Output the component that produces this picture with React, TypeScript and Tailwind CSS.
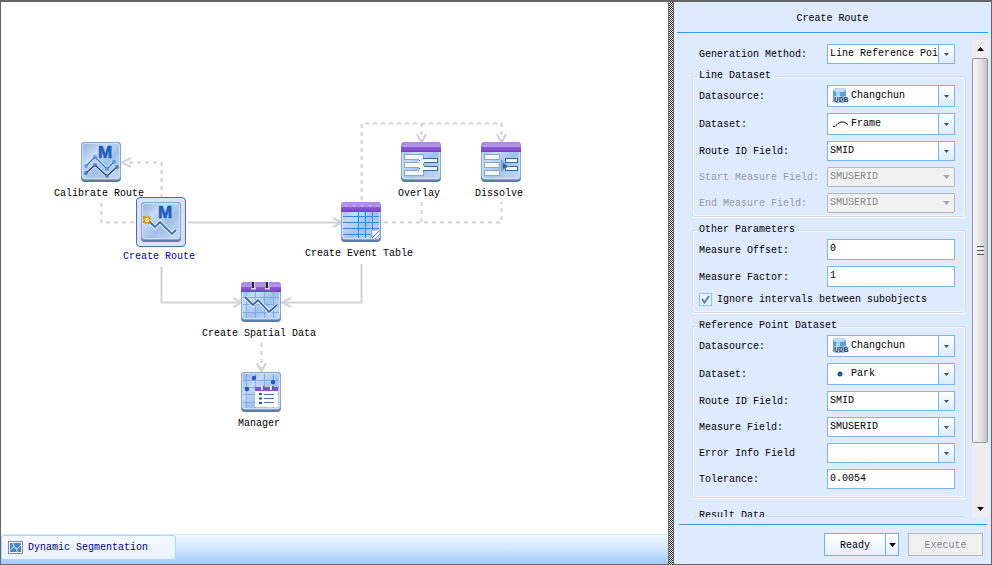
import { useId, type ReactNode } from "react";

const TILE = "h-10 w-10 shrink-0";

function Tile({ header, grid, children }: { header?: boolean; grid?: boolean; children: ReactNode }) {
  const id = useId();
  return (
    <svg viewBox="0 0 40 40" className={TILE} aria-hidden="true">
      <defs>
        <linearGradient id={id + "b"} x1="0" y1="0" x2="1" y2="1">
          <stop offset="0" stopColor="#94b4de" />
          <stop offset="0.3" stopColor="#c6dbf5" />
          <stop offset="0.6" stopColor="#a3c1e8" />
          <stop offset="1" stopColor="#c3d9f3" />
        </linearGradient>
        <linearGradient id={id + "p"} x1="0" y1="0" x2="0" y2="1">
          <stop offset="0" stopColor="#a98ae4" />
          <stop offset="0.5" stopColor="#b496ea" />
          <stop offset="0.55" stopColor="#8c5bd2" />
          <stop offset="1" stopColor="#7a3fc4" />
        </linearGradient>
      </defs>
      <rect width="40" height="40" rx="4" fill="#5a7cab" />
      <rect width="40" height="38" rx="4" fill="#86a6d2" />
      <rect x="1" y="1" width="38" height="36" rx="3" fill="#d0e1f6" />
      <rect x="2" y="2" width="36" height="34" rx="2" fill={`url(#${id}b)`} />
      {grid && (
        <path
          d="M5.500 2V36M14.500 2V36M23.500 2V36M32.500 2V36M2 8.500H38M2 15.500H38M2 22.500H38M2 30.500H38"
          stroke="#6ea5e6"
          strokeWidth="1"
          opacity="0.8"
        />
      )}
      {header && <path d="M0 10V4Q0 0 4 0H36Q40 0 40 4V10Z" fill={`url(#${id}p)`} />}
      {children}
    </svg>
  );
}

function Measure() {
  return (
    <text x="17" y="16" fontFamily="Liberation Sans, sans-serif" fontWeight="700" fontSize="17" fill="#1f5cc0" stroke="#1f5cc0" strokeWidth="0.6">
      M
    </text>
  );
}

function CalibrateIcon() {
  const upper = [[5, 24], [14, 15], [26, 27], [33, 20]];
  const lower = [[5, 31], [14, 23], [26, 34], [36, 25]];
  const line = (p: number[][]) => p.map((q) => q.join(",")).join(" ");
  return (
    <Tile>
      <Measure />
      <g fill="none">
        <polyline points={line(upper)} stroke="#eaf3ff" strokeWidth="3" />
        <polyline points={line(upper)} stroke="#3a7cc4" strokeWidth="1.500" />
        <polyline points={line(lower)} stroke="#eaf3ff" strokeWidth="3" />
        <polyline points={line(lower)} stroke="#2c4478" strokeWidth="1.500" />
      </g>
      {upper.map(([x, y]) => (
        <rect key={x} x={x - 1} y={y - 1} width="2" height="2" fill="#fff" stroke="#1f7ad8" />
      ))}
      {lower.map(([x, y]) => (
        <rect key={x} x={x - 1} y={y - 1} width="2" height="2" fill="#fff" stroke="#1c50b8" />
      ))}
    </Tile>
  );
}

function RouteIcon() {
  return (
    <Tile>
      <Measure />
      <path d="M8 19L14 25L19 20L31 32L35 28" fill="none" stroke="#f0f7ff" strokeWidth="3.500" />
      <path d="M8 19L14 25L19 20L31 32L35 28" fill="none" stroke="#3a72ae" strokeWidth="1.800" />
      <path d="M2 14h2l1.500 1 1.500-1 1.500 1 1-1v3l-1 1 1 2v2h-2l-1.500-1-1.500 1-1-1H2v-2l1-1-1-1Z" fill="#d98a10" />
      <path d="M4 16h4v4H4Z" fill="#fff17a" />
      <path d="M6 13v9M2 17.500h8" stroke="#f3b92a" strokeWidth="1" />
      <path d="M5 16.500h2v2H5Z" fill="#fffde0" />
    </Tile>
  );
}

function TableIcon() {
  return (
    <Tile header>
      <path d="M4 3.500h2M12 3.500h2M20 3.500h2M28 3.500h2M35 3.500h1" stroke="#c9b4f2" />
      <path d="M2 14.500H38M2 20.500H38M2 26.500H38M2 32.500H30M17.500 10V36M24.500 10V36M31.500 10V30" stroke="#2f8bea" />
      <path d="M30 38L31 28H39V32L34 37Z" fill="#f1f3f6" stroke="#8b98ab" strokeWidth="0.8" />
      <path d="M31 36L38 29" stroke="#7d8794" />
    </Tile>
  );
}

function OverlayIcon() {
  return (
    <Tile header>
      <g fill="#f4f9ff" stroke="#86aad6">
        <rect x="3.500" y="12.500" width="19" height="5" />
        <rect x="3.500" y="20.500" width="19" height="5" />
        <rect x="3.500" y="28.500" width="19" height="5" />
      </g>
      <g fill="#eef6ff" stroke="#2f6ca8">
        <rect x="18.500" y="16.500" width="18" height="4" />
        <rect x="18.500" y="24.500" width="18" height="4" />
      </g>
      <path d="M18 17h4M18 20h5M18 25h5M18 28h4" stroke="#f4f9ff" strokeWidth="2" />
    </Tile>
  );
}

function DissolveIcon() {
  return (
    <Tile header>
      <g fill="#f4f9ff" stroke="#86aad6">
        <rect x="3.500" y="12.500" width="15" height="5" />
        <rect x="3.500" y="20.500" width="15" height="5" />
        <rect x="3.500" y="28.500" width="15" height="5" />
      </g>
      <g fill="#eef6ff" stroke="#2f6ca8">
        <rect x="24.500" y="16.500" width="12" height="4" />
        <rect x="24.500" y="24.500" width="12" height="4" />
      </g>
      <path d="M20 17L28 24.500L20 30Z" fill="#7fa4d0" />
      <path d="M22 21.500L26.500 24.500L22 27Z" fill="#2f5f9c" />
    </Tile>
  );
}

function SpatialIcon() {
  return (
    <Tile header grid>
      {[13, 27].map((x) => (
        <g key={x}>
          <path d={`M${x - 3} 5.500h5v2h-5Z`} fill="#dedae8" />
          <path d={`M${x - 1} 0V6`} stroke="#1e2430" strokeWidth="2" />
          <path d={`M${x + 0.5} 0V6`} stroke="#d8d8e0" />
        </g>
      ))}
      <path d="M4 15L12 23L17 18L28 30L36 23" fill="none" stroke="#f0f7ff" strokeWidth="3.500" />
      <path d="M4 15L12 23L17 18L28 30L36 23" fill="none" stroke="#34689f" strokeWidth="1.800" />
    </Tile>
  );
}

function ManagerIcon() {
  return (
    <Tile grid>
      <g fill="#1f56c8">
        <circle cx="13" cy="6" r="2.200" />
        <circle cx="32" cy="10" r="2.200" />
        <circle cx="6" cy="17" r="2.200" />
      </g>
      <rect x="14" y="15" width="23" height="20" rx="1" fill="#fff" />
      <rect x="14" y="15" width="23" height="4" fill="#8152cc" />
      <path d="M21 14v4M30 14v4" stroke="#e8e4f0" strokeWidth="2" />
      <path d="M22.500 14v3M31.500 14v3" stroke="#5a5668" />
      <path d="M18 22h3M18 26.500h3M18 31h3" stroke="#1f5ca8" strokeWidth="2" />
      <path d="M23 22.500h10M23 26.500h10M23 30.500h10" stroke="#3a78b4" />
    </Tile>
  );
}

function Connectors() {
  return (
    <svg width="668" height="533" className="absolute left-0 top-0" fill="none" stroke="#d3d3d5" strokeWidth="2" aria-hidden="true">
      <g strokeDasharray="4 4">
        <path d="M160.500 196V160.500H124" />
        <path d="M100.500 201V220.500H136" />
        <path d="M360.500 198V121.500H500.500V140" />
        <path d="M420.500 121V140" />
        <path d="M383 220.500H500.500V200" />
        <path d="M420.500 220V200" />
        <path d="M260.500 341V368" />
      </g>
      <path d="M187 220.500H340M160.500 265V300.500H240M360.500 262V300.500H282" />
      <path d="M130 156L121 160.500L130 165M332 216L341 220.500L332 225M232 296L241 300.500L232 305M290 296L281 300.500L290 305M416 132L420.500 141L425 132M496 132L500.500 141L505 132M256 361L260.500 370L265 361" />
    </svg>
  );
}

function Node({ at, label, active, children }: { at: string; label: string; active?: boolean; children: ReactNode }) {
  return (
    <button
      type="button"
      className={`absolute flex -translate-x-1/2 flex-col items-center whitespace-nowrap ${active ? "gap-1 text-[#0000d8]" : "gap-[6px]"} ${at}`}
    >
      <span className={active ? "rounded border border-[#3b74b0] bg-[#dfdffb] p-1" : ""}>{children}</span>
      <span className="pr-1 leading-3">{label}</span>
    </button>
  );
}

function Database() {
  return (
    <svg width="18" height="18" viewBox="0 0 18 18" aria-hidden="true">
      <path d="M1 3Q1 1 7.500 1T14 3V14Q14 16 7.500 16T1 14Z" fill="#5a9de0" />
      <path d="M4 2H8V15H4Z" fill="#a9d2f7" />
      <ellipse cx="7.500" cy="3" rx="6.500" ry="2" fill="#c2dff8" />
      <text x="2" y="15" fontFamily="Liberation Mono, monospace" fontSize="8" fontWeight="700" fill="#24406e" stroke="#dcebfb" strokeWidth="1" paintOrder="stroke">
        UDB
      </text>
    </svg>
  );
}

function LineGlyph() {
  return (
    <svg width="17" height="10" viewBox="0 0 17 10" fill="none" stroke="#111" aria-hidden="true">
      <path d="M1 7.500H3L6 4.500L9 3H12L16 5.500" />
    </svg>
  );
}

function PointGlyph() {
  return (
    <svg width="17" height="10" viewBox="0 0 17 10" aria-hidden="true">
      <circle cx="8" cy="5" r="2.500" fill="#1d55a8" />
    </svg>
  );
}

function Arrow({ wide }: { wide?: boolean }) {
  return (
    <svg width={wide ? 7 : 5} height={wide ? 4 : 3} viewBox="0 0 5 3" fill="currentColor" aria-hidden="true">
      <path d="M0 0H5L2.500 3Z" />
    </svg>
  );
}

function Row({ id, label, disabled, children }: { id: string; label: string; disabled?: boolean; children: ReactNode }) {
  return (
    <div className="flex items-center">
      <label htmlFor={id} className={`w-32 shrink-0 pt-[2px] ${disabled ? "text-[#979ba3]" : ""}`}>
        {label}
      </label>
      <div className="min-w-0 flex-1">{children}</div>
    </div>
  );
}

function SelectRow({ id, label, value, icon, disabled }: { id: string; label: string; value: string; icon?: ReactNode; disabled?: boolean }) {
  return (
    <Row id={id} label={label} disabled={disabled}>
      <div
        className={`relative flex border ${icon ? "h-[22px]" : "h-5"} ${
          disabled ? "rounded-[2px] border-[#b4b8bc] bg-[#f2f2f2] text-[#84878b]" : "border-[#7ab4fa] bg-white"
        }`}
      >
        <select
          id={id}
          disabled={disabled}
          defaultValue={value}
          className={`min-w-0 flex-1 appearance-none overflow-hidden bg-transparent pr-4 opacity-100 outline-none ${icon ? "pl-[23px]" : "pl-[2px]"}`}
        >
          <option value={value}>{value}</option>
        </select>
        {icon && <span className="pointer-events-none absolute inset-y-0 left-1 flex items-center">{icon}</span>}
        <span
          className={`pointer-events-none absolute inset-y-0 right-0 flex w-4 items-center justify-center ${
            disabled ? "text-[#a4a8ac]" : "border-l border-[#7ab4fa] bg-linear-to-b from-white to-[#dcebfd] text-[#3c5078]"
          }`}
        >
          <Arrow wide={disabled} />
        </span>
      </div>
    </Row>
  );
}

function TextRow({ id, label, value, size = "h-[21px]" }: { id: string; label: string; value: string; size?: string }) {
  return (
    <Row id={id} label={label}>
      <input id={id} type="text" defaultValue={value} className={`block w-full border border-[#7ab4fa] bg-white pl-[2px] pb-[2px] outline-none ${size}`} />
    </Row>
  );
}

function Group({ title, pad = "", children }: { title: string; pad?: string; children?: ReactNode }) {
  return (
    <fieldset className={`min-w-0 rounded-[3px] border border-[#d6dade] pl-[6px] pr-[10px] pt-[3px] shadow-[inset_0_0_0_1px_#f4f8fe,0_1px_0_#fff] ${pad}`}>
      <legend className="bg-[#deeafd] pr-[2px] leading-3">{title}</legend>
      <div className="flex flex-col gap-[6px]">{children}</div>
    </fieldset>
  );
}

function Scrollbar() {
  return (
    <div className="flex w-4 shrink-0 flex-col bg-[#eeeef0]">
      <button type="button" aria-label="Scroll up" className="flex h-[18px] items-center justify-center">
        <span className="rotate-180">
          <Arrow wide />
        </span>
      </button>
      <div className="flex flex-1 flex-col">
        <div className="flex flex-[386] flex-col items-center justify-center gap-px rounded-[2px] border border-[#96979b] bg-linear-to-r from-[#f7f7f7] via-[#e4e4e8] to-[#c4c4ca]">
          <span className="h-px w-[7px] bg-[#555c68]" />
          <span className="h-px w-[7px] bg-[#fff]" />
          <span className="h-px w-[7px] bg-[#555c68]" />
          <span className="h-px w-[7px] bg-[#fff]" />
          <span className="h-px w-[7px] bg-[#555c68]" />
        </div>
        <div className="flex-[57]" />
      </div>
      <button type="button" aria-label="Scroll down" className="flex h-[17px] items-center justify-center">
        <Arrow wide />
      </button>
    </div>
  );
}

function Canvas() {
  return (
    <main className="flex min-w-0 flex-1 flex-col border border-t-2 border-[#666] bg-white">
      <div className="relative min-h-0 flex-1 overflow-hidden">
        <Connectors />
        <Node at="left-[100px] top-[140px]" label="Calibrate Route"><CalibrateIcon /></Node>
        <Node at="left-[160px] top-[195px]" label="Create Route" active><RouteIcon /></Node>
        <Node at="left-[360px] top-[200px]" label="Create Event Table"><TableIcon /></Node>
        <Node at="left-[420px] top-[140px]" label="Overlay"><OverlayIcon /></Node>
        <Node at="left-[500px] top-[140px]" label="Dissolve"><DissolveIcon /></Node>
        <Node at="left-[260px] top-[280px]" label="Create Spatial Data"><SpatialIcon /></Node>
        <Node at="left-[260px] top-[370px]" label="Manager"><ManagerIcon /></Node>
      </div>
      <nav className="flex h-[30px] shrink-0 items-start border-t border-[#d9e9fb] bg-linear-to-b from-[#f2f8ff] via-[#cfe4fe] to-[#a0cbfd]">
        <button type="button" className="flex h-[25px] w-[175px] items-center gap-[5px] rounded-[3px] border border-[#b3d3f8] bg-linear-to-b from-[#f4f9ff] to-[#e9f2ff] pl-[6px] text-[#000080]">
          <svg width="15" height="13" viewBox="0 0 15 13" aria-hidden="true">
            <rect x="0.500" y="0.500" width="14" height="12" fill="#fff" stroke="#7d8aa0" />
            <rect x="2" y="2" width="11" height="9" fill="#4a86c4" />
            <path d="M2 9L6 6L5 2M6 6L9 8L13 4M9 8V11" fill="none" stroke="#d8e8f8" />
          </svg>
          Dynamic Segmentation
        </button>
      </nav>
    </main>
  );
}

export default function App() {
  return (
    <div className="flex h-screen overflow-hidden bg-[#deeafd] font-['Liberation_Mono',monospace] text-[10px] leading-3 text-black">
      <Canvas />
      <div className="w-1 shrink-0 border-t-2 border-[#666] bg-[repeating-conic-gradient(#222_0_25%,#fff_0_50%)] bg-[length:2px_2px]" />
      <aside className="flex w-[319px] shrink-0 flex-col border border-t-2 border-[#666] bg-[#deeafd]">
        <h1 className="mx-[3px] flex h-[31px] shrink-0 items-center justify-center border-b border-[#3c96f5] pt-[3px]">Create Route</h1>
        <div className="flex min-h-0 flex-1 gap-[6px] py-[7px] pl-[18px] pr-[3px]">
          <form className="flex min-w-0 flex-1 flex-col gap-[7px] overflow-hidden pt-1">
            <div className="-mb-px pl-[7px] pr-[11px]">
              <SelectRow id="method" label="Generation Method:" value="Line Reference Point" />
            </div>
            <Group title="Line Dataset" pad="pb-[3px]">
              <SelectRow id="line-source" label="Datasource:" value="Changchun" icon={<Database />} />
              <SelectRow id="line-dataset" label="Dataset:" value="Frame" icon={<LineGlyph />} />
              <SelectRow id="line-route" label="Route ID Field:" value="SMID" />
              <SelectRow id="start" label="Start Measure Field:" value="SMUSERID" disabled />
              <SelectRow id="end" label="End Measure Field:" value="SMUSERID" disabled />
            </Group>
            <Group title="Other Parameters" pad="pb-[6px]">
              <TextRow id="offset" label="Measure Offset:" value="0" />
              <TextRow id="factor" label="Measure Factor:" value="1" />
              <label className="flex h-[13px] items-center gap-[5px]">
                <input type="checkbox" defaultChecked className="peer sr-only" />
                <span className="flex h-[13px] w-[13px] items-center justify-center border border-[#8fc0f8] bg-[#eaf2fd] text-transparent peer-checked:text-[#5d80ae]">
                  <svg width="9" height="9" viewBox="0 0 9 9" fill="none" stroke="currentColor" strokeWidth="2" aria-hidden="true">
                    <path d="M1 4L3.500 7.500L8 1" />
                  </svg>
                </span>
                Ignore intervals between subobjects
              </label>
            </Group>
            <Group title="Reference Point Dataset" pad="pb-[8px]">
              <SelectRow id="point-source" label="Datasource:" value="Changchun" icon={<Database />} />
              <SelectRow id="point-dataset" label="Dataset:" value="Park" icon={<PointGlyph />} />
              <SelectRow id="point-route" label="Route ID Field:" value="SMID" />
              <SelectRow id="measure" label="Measure Field:" value="SMUSERID" />
              <SelectRow id="error" label="Error Info Field" value="" />
              <TextRow id="tolerance" label="Tolerance:" value="0.0054" size="h-5" />
            </Group>
            <div className="mt-[5px]">
              <Group title="Result Data" />
            </div>
          </form>
          <Scrollbar />
        </div>
        <footer className="ml-[5px] mr-1 flex shrink-0 justify-end gap-[9px] border-t border-[#3c96f5] py-2 pr-1">
          <div className="flex h-[23px] border border-[#6fb0fa] bg-linear-to-b from-white to-[#e4effe]">
            <button type="button" className="w-[60px] pt-[2px]">Ready</button>
            <button type="button" aria-label="More run options" className="flex w-[13px] items-center justify-center border-l border-[#6fb0fa]">
              <Arrow wide />
            </button>
          </div>
          <button type="button" disabled className="h-[23px] w-[75px] border border-[#b4b8bc] bg-[#f0f0f0] pt-[2px] text-[#84878b]">
            Execute
          </button>
        </footer>
      </aside>
    </div>
  );
}
